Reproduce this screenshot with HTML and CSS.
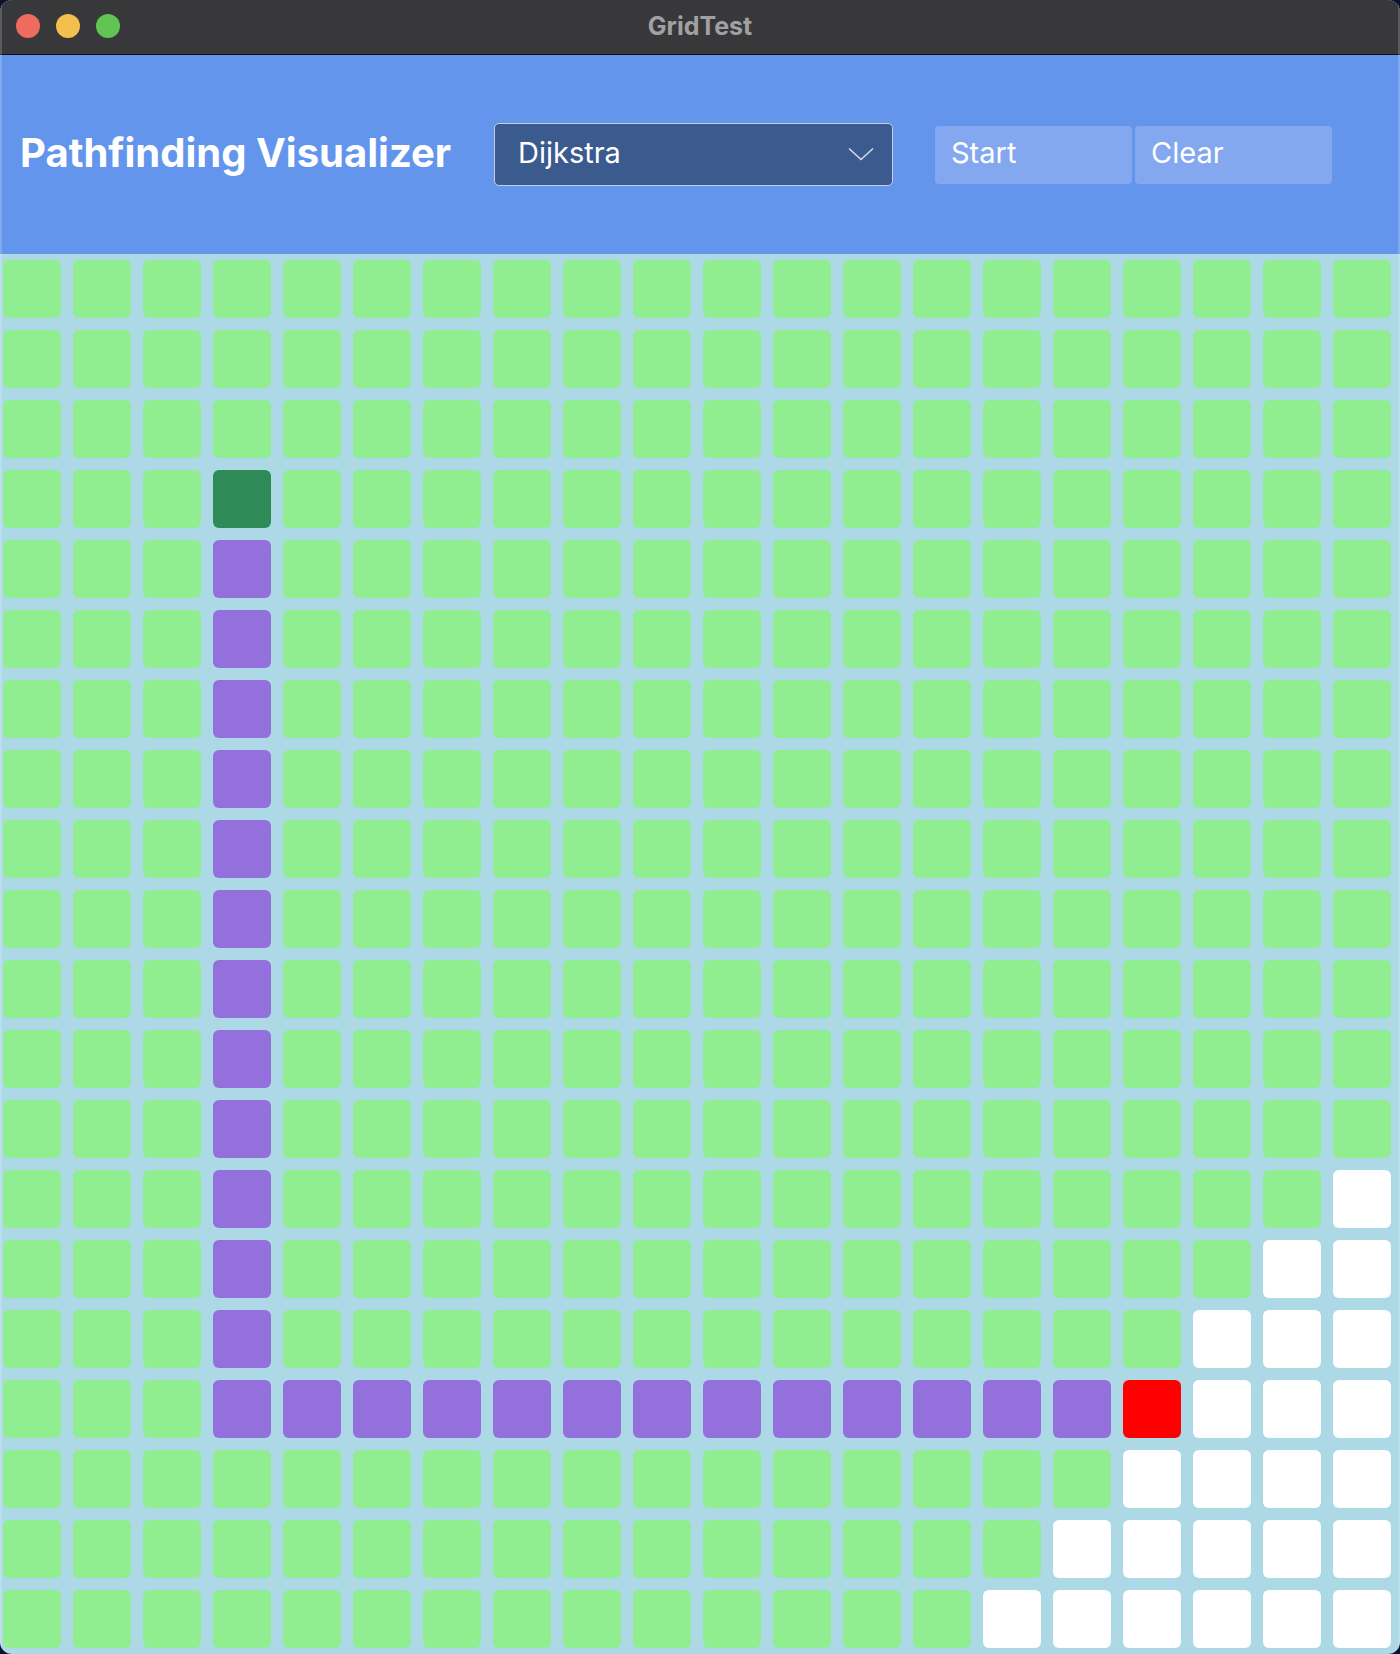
FILE: index.html
```html
<!DOCTYPE html>
<html lang="en">

<head>
  <meta charset="UTF-8">
  <meta name="viewport" content="width=device-width, initial-scale=1.0">
  <title>GridTest</title>

  <link rel="stylesheet" href="styles.css">
</head>

<body>
  <div class="window">
    <div class="titlebar">
      <div class="lights">
        <span class="light close"></span>
        <span class="light min"></span>
        <span class="light max"></span>
      </div>
      <div class="win-title">GridTest</div>
      <div></div>
    </div>

    <header class="toolbar">
      <h1 class="app-title">Pathfinding Visualizer</h1>
      <div class="picker">
        <span>Dijkstra</span>
        <svg class="chevron" width="26" height="14" viewBox="0 0 26 14">
          <path d="M1 1.5 L13 12.5 L25 1.5" fill="none" stroke="#d3dbea" stroke-width="1.6" />
        </svg>
      </div>
      <div class="actions">
        <button class="btn">Start</button>
        <button class="btn">Clear</button>
      </div>
    </header>

    <main id="grid" class="grid"></main>
  </div>

  <script src="script.js"></script>
</body>

</html>
```

FILE: styles.css
```css
* {
  box-sizing: border-box;
}

body {
  background: #0c1130;
  font-family: Inter, "Noto Sans", sans-serif;
  margin: 0;
}

.window {
  background: #add8e6;
  border-radius: 12px;
  height: 1654px;
  overflow: hidden;
  position: relative;
  width: 1400px;
}

.window::after {
  border-left: 2px solid rgba(255, 255, 255, 0.18);
  border-right: 2px solid rgba(255, 255, 255, 0.18);
  content: "";
  inset: 0;
  pointer-events: none;
  position: absolute;
}

.titlebar {
  align-items: center;
  background: #38383a;
  border-bottom: 1px solid #0e0e0e;
  display: grid;
  grid-template-columns: 1fr auto 1fr;
  height: 55px;
  padding-bottom: 3px;
}

.lights {
  display: flex;
  gap: 16px;
  padding-left: 16px;
}

.light {
  border-radius: 50%;
  display: block;
  height: 24px;
  width: 24px;
}

.close {
  background: #ee6b60;
}

.min {
  background: #f5bf4f;
}

.max {
  background: #61c554;
}

.win-title {
  color: #a1a1a3;
  font-size: 25px;
  font-weight: 700;
}

.toolbar {
  align-items: center;
  background: #6495ed;
  display: flex;
  height: 199px;
  padding: 0 0 0 20px;
}

.app-title {
  color: #fff;
  flex: none;
  font-size: 40px;
  font-weight: 700;
  margin: 0 0 4px;
  width: 474px;
}

.picker {
  align-items: center;
  background: #3b5a8e;
  border: 1.5px solid #c8d0de;
  border-radius: 5px;
  color: #fff;
  display: flex;
  font-size: 29px;
  height: 63px;
  justify-content: space-between;
  padding: 0 18px 4px 23px;
  width: 399px;
}

.chevron {
  margin-top: 2px;
}

.actions {
  display: flex;
  gap: 3px;
  margin-left: 42px;
}

.btn {
  background: #83a8ef;
  border: 0;
  border-radius: 4px;
  color: #fff;
  font-family: inherit;
  font-size: 29px;
  height: 58px;
  padding: 0 0 4px 16px;
  text-align: left;
  width: 197px;
}

.btn:hover {
  cursor: pointer;
}

.grid {
  display: grid;
  gap: 12px;
  grid-template-columns: repeat(20, 58px);
  grid-auto-rows: 58px;
  padding: 6px 9px 6px 3px;
}

.cell {
  background: #90ee90;
  border-radius: 6px;
}

.cell.start {
  background: #2e8b57;
}

.cell.path {
  background: #9370db;
}

.cell.end {
  background: #ff0000;
}

.cell.unvisited {
  background: #fff;
}
```

FILE: script.js
```js
const ROWS = 20;
const COLS = 20;
const start = [3, 3];
const end = [16, 16];

let path = [];
for (let r = 4; r <= 16; r++) path.push(r + ',3');
for (let c = 4; c <= 15; c++) path.push('16,' + c);

let grid = document.querySelector('#grid');

for (let r = 0; r < ROWS; r++) {
  for (let c = 0; c < COLS; c++) {
    let cell = document.createElement('div');
    cell.className = 'cell';
    let dist = (r - start[0]) + (c - start[1]);

    if (r === start[0] && c === start[1]) {
      cell.classList.add('start');
    } else if (r === end[0] && c === end[1]) {
      cell.classList.add('end');
    } else if (path.includes(r + ',' + c)) {
      cell.classList.add('path');
    } else if (dist > 26 || (dist === 26 && r < end[0])) {
      cell.classList.add('unvisited');
    }

    grid.appendChild(cell);
  }
}
```
